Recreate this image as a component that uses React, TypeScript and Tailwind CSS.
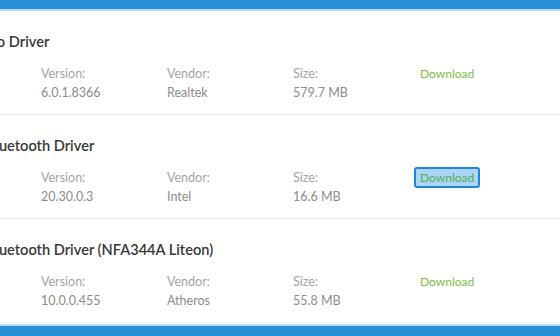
import React from 'react';

type Driver = {
    title: string;
    offset: string;
    version: string;
    vendor: string;
    size: string;
    focused?: boolean;
};

const drivers: Driver[] = [
    { title: 'Audio Driver', offset: 'ml-[-33px]', version: '6.0.1.8366', vendor: 'Realtek', size: '579.7 MB' },
    { title: 'Bluetooth Driver', offset: 'ml-[-14px]', version: '20.30.0.3', vendor: 'Intel', size: '16.6 MB', focused: true },
    { title: 'Bluetooth Driver (NFA344A Liteon)', offset: 'ml-[-14px]', version: '10.0.0.455', vendor: 'Atheros', size: '55.8 MB' },
];

const Field = ({ label, value }: { label: string; value: string }) => (
    <div className="flex flex-col">
        <span className="text-[12.5px] leading-[19px] text-[#a3a3a3]">{label}</span>
        <span className="text-[12.5px] leading-[19px] text-[#8c8c8c]">{value}</span>
    </div>
);

const DriverRow = ({ d }: { d: Driver }) => (
    <div className="border-b border-[#ececec] pt-[21px] pb-[11px] h-[104px] overflow-hidden">
        <h3 className={`text-[14.6px] leading-[20px] font-semibold text-[#383838] whitespace-nowrap ${d.offset}`}>{d.title}</h3>
        <div className="grid grid-cols-[126px_126px_121px_auto] pl-[41px] mt-[12px]">
            <Field label="Version:" value={d.version} />
            <Field label="Vendor:" value={d.vendor} />
            <Field label="Size:" value={d.size} />
            <div className="flex items-start">
                <button
                    className={`-mt-[1px] px-[4px] text-[12px] leading-[17px] rounded-[3px] border-2 ${
                        d.focused ? 'border-[#1f86d8] bg-[#a9d6f2] text-[#5aaa5e]' : 'border-transparent text-[#7cc043]'
                    }`}
                >
                    Download
                </button>
            </div>
        </div>
    </div>
);

export default function App() {
    return (
        <div className="w-[560px] h-[336px] bg-white flex flex-col overflow-hidden" style={{ fontFamily: 'Lato, "Noto Sans", sans-serif' }}>
            <div className="h-[9px] bg-[#2b8fd8] shrink-0" />
            <div className="h-[2px] bg-[#b8dcf4] shrink-0" />
            <div className="flex-1">
                {drivers.map((d) => (
                    <DriverRow key={d.title} d={d} />
                ))}
            </div>
            <div className="h-[2px] bg-[#b8dcf4] shrink-0" />
            <div className="h-[10px] bg-[#2b8fd8] shrink-0" />
        </div>
    );
}
